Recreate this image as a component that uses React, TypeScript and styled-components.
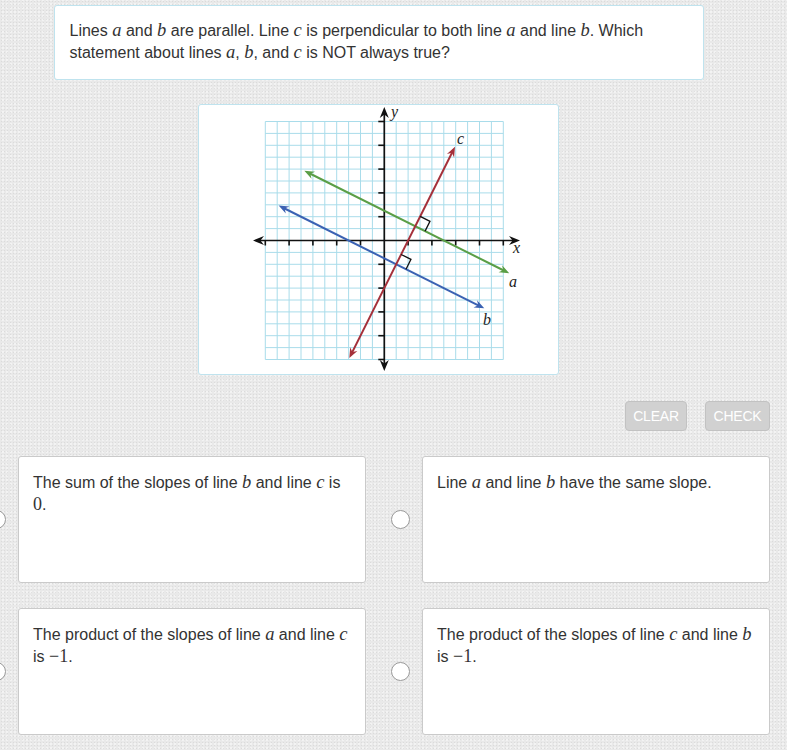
import React from "react";
import styled, { createGlobalStyle } from "styled-components";

const Global = createGlobalStyle`
  html, body {
    margin: 0;
    padding: 0;
  }
  body {
    min-height: 100vh;
    overflow: hidden;
    background-color: #e9e9e9;
    background-image:
      radial-gradient(circle, rgba(205,205,205,0.5) 0.7px, transparent 0.9px),
      radial-gradient(circle, rgba(255,255,255,0.45) 0.7px, transparent 0.9px);
    background-size: 3px 3px, 4px 4px;
    background-position: 0 0, 1px 2px;
    font-family: "Liberation Sans", Arial, sans-serif;
    color: #333;
  }
`;

const Page = styled.div`
  width: 783px;
  margin-left: -13px;
  padding-top: 5px;
  display: flex;
  flex-direction: column;
`;

const Question = styled.div`
  align-self: center;
  width: 650px;
  box-sizing: border-box;
  background: #fff;
  border: 1px solid #bfe3ee;
  border-radius: 3px;
  padding: 14px 20px 15px 15px;
  font-size: 16px;
  line-height: 22px;
  color: #333;
`;

const M = styled.span`
  font-family: "Liberation Serif", "Times New Roman", serif;
  font-style: italic;
  font-size: 18.5px;
  line-height: 1;
`;

const N = styled.span`
  font-family: "Liberation Serif", "Times New Roman", serif;
  font-size: 18px;
  line-height: 1;
`;

const GraphBox = styled.div`
  align-self: center;
  margin-top: 24px;
  margin-right: 1px;
  width: 361px;
  height: 271px;
  box-sizing: border-box;
  background: #fff;
  border: 1px solid #bfe3ee;
  border-radius: 3px;
  display: flex;
`;

const Toolbar = styled.div`
  margin-top: 26px;
  display: flex;
  justify-content: flex-end;
  gap: 18px;
`;

const Btn = styled.div<{ $w: number }>`
  width: ${(p) => p.$w}px;
  height: 30px;
  box-sizing: border-box;
  border: 1px solid #c2c2c2;
  border-radius: 4px;
  background: #d1d1d1;
  color: #fff;
  font-size: 14px;
  display: flex;
  align-items: center;
  justify-content: center;
  letter-spacing: -0.2px;
`;

const Answers = styled.div`
  margin-top: 25px;
  display: grid;
  grid-template-columns: 1fr 1fr;
  column-gap: 25px;
  row-gap: 25px;
`;

const Choice = styled.div`
  display: flex;
  align-items: center;
  gap: 12px;
`;

const Radio = styled.div`
  width: 19px;
  height: 19px;
  flex: none;
  box-sizing: border-box;
  border-radius: 50%;
  border: 1px solid #9a9a9a;
  background: #fff;
`;

const Card = styled.div`
  flex: 1;
  height: 127px;
  box-sizing: border-box;
  background: #fff;
  border: 1px solid #cacaca;
  border-radius: 3px;
  padding: 15px 9px 15px 14px;
  font-size: 16px;
  line-height: 22px;
  color: #333;
`;

const Label = styled.text`
  font-family: "Liberation Serif", "Times New Roman", serif;
  font-style: italic;
  font-size: 16px;
  fill: #222;
`;

const OX = 185.3;
const OY = 135.5;
const U = 23.8;
const X = (u: number) => OX + u * U;
const Y = (v: number) => OY - v * U;

function arrow(tx: number, ty: number, ang: number, len: number, wid: number) {
  const c = Math.cos(ang);
  const s = Math.sin(ang);
  const pt = (a: number, b: number) =>
    `${(tx + a * c - b * s).toFixed(2)},${(ty + a * s + b * c).toFixed(2)}`;
  return `M${pt(0, 0)} L${pt(-len, -wid / 2)} L${pt(-len * 0.68, 0)} L${pt(-len, wid / 2)} Z`;
}

type Seg = { x1: number; y1: number; x2: number; y2: number; color: string };

const Line2: React.FC<Seg> = ({ x1, y1, x2, y2, color }) => {
  const ax = X(x1), ay = Y(y1), bx = X(x2), by = Y(y2);
  const ang = Math.atan2(by - ay, bx - ax);
  const back = 5;
  const c = Math.cos(ang), s = Math.sin(ang);
  return (
    <g>
      <line
        x1={ax + c * back}
        y1={ay + s * back}
        x2={bx - c * back}
        y2={by - s * back}
        stroke={color}
        strokeWidth={2}
      />
      <path d={arrow(bx, by, ang, 10, 8)} fill={color} />
      <path d={arrow(ax, ay, ang + Math.PI, 10, 8)} fill={color} />
    </g>
  );
};

const RightAngle: React.FC<{ u: number; v: number }> = ({ u, v }) => {
  const px = X(u), py = Y(v);
  const s = 11;
  const d1 = [1 / Math.sqrt(5), -2 / Math.sqrt(5)];
  const d2 = [2 / Math.sqrt(5), 1 / Math.sqrt(5)];
  const p1 = [px + s * d1[0], py + s * d1[1]];
  const p2 = [p1[0] + s * d2[0], p1[1] + s * d2[1]];
  const p3 = [px + s * d2[0], py + s * d2[1]];
  return (
    <polyline
      points={`${p1[0]},${p1[1]} ${p2[0]},${p2[1]} ${p3[0]},${p3[1]}`}
      fill="none"
      stroke="#111"
      strokeWidth={1.3}
    />
  );
};

const Graph: React.FC = () => {
  const grid: React.ReactNode[] = [];
  for (let i = -10; i <= 10; i++) {
    const t = i / 2;
    grid.push(
      <line key={`v${i}`} x1={X(t)} y1={Y(5)} x2={X(t)} y2={Y(-5)} stroke="#a9dcea" strokeWidth={1} />
    );
    grid.push(
      <line key={`h${i}`} x1={X(-5)} y1={Y(t)} x2={X(5)} y2={Y(t)} stroke="#a9dcea" strokeWidth={1} />
    );
  }
  const ticks: React.ReactNode[] = [];
  for (let i = -5; i <= 5; i++) {
    if (i === 0) continue;
    ticks.push(<line key={`tx${i}`} x1={X(i)} y1={OY} x2={X(i)} y2={OY + 5} stroke="#111" strokeWidth={1.6} />);
    ticks.push(<line key={`ty${i}`} x1={OX - 6} y1={Y(i)} x2={OX} y2={Y(i)} stroke="#111" strokeWidth={1.6} />);
  }
  const axL = 54, axR = 321, ayT = 2, ayB = 266;
  return (
    <svg width="359" height="269" viewBox="0 0 359 269">
      {grid}
      <line x1={axL + 6} y1={OY} x2={axR - 6} y2={OY} stroke="#111" strokeWidth={1.7} />
      <line x1={OX} y1={ayT + 6} x2={OX} y2={ayB - 6} stroke="#111" strokeWidth={1.7} />
      <path d={arrow(axR, OY, 0, 11, 9)} fill="#111" />
      <path d={arrow(axL, OY, Math.PI, 11, 9)} fill="#111" />
      <path d={arrow(OX, ayT, -Math.PI / 2, 11, 9)} fill="#111" />
      <path d={arrow(OX, ayB, Math.PI / 2, 11, 9)} fill="#111" />
      {ticks}
      <Line2 x1={-3.36} y1={2.93} x2={5.25} y2={-1.375} color="#5a9e46" />
      <Line2 x1={-4.44} y1={1.47} x2={4.2} y2={-2.85} color="#3b62b3" />
      <Line2 x1={-1.47} y1={-4.94} x2={2.97} y2={3.94} color="#a5303a" />
      <RightAngle u={1.3} v={0.6} />
      <RightAngle u={0.5} v={-1} />
      <Label x={192} y={12}>y</Label>
      <Label x={314} y={148}>x</Label>
      <Label x={258} y={39}>c</Label>
      <Label x={310} y={182}>a</Label>
      <Label x={284} y={220}>b</Label>
    </svg>
  );
};

export default function App() {
  return (
    <>
      <Global />
      <Page>
        <Question>
          Lines <M>a</M> and <M>b</M> are parallel. Line <M>c</M> is perpendicular to both line <M>a</M> and
          line <M>b</M>. Which statement about lines <M>a</M>, <M>b</M>, and <M>c</M> is NOT always true?
        </Question>
        <GraphBox>
          <Graph />
        </GraphBox>
        <Toolbar>
          <Btn $w={62}>CLEAR</Btn>
          <Btn $w={65}>CHECK</Btn>
        </Toolbar>
        <Answers>
          <Choice>
            <Radio />
            <Card>
              The sum of the slopes of line <M>b</M> and line <M>c</M> is <N>0</N>.
            </Card>
          </Choice>
          <Choice>
            <Radio />
            <Card>
              Line <M>a</M> and line <M>b</M> have the same slope.
            </Card>
          </Choice>
          <Choice>
            <Radio />
            <Card>
              The product of the slopes of line <M>a</M> and line <M>c</M> is <N>−1</N>.
            </Card>
          </Choice>
          <Choice>
            <Radio />
            <Card>
              The product of the slopes of line <M>c</M> and line <M>b</M> is <N>−1</N>.
            </Card>
          </Choice>
        </Answers>
      </Page>
    </>
  );
}
